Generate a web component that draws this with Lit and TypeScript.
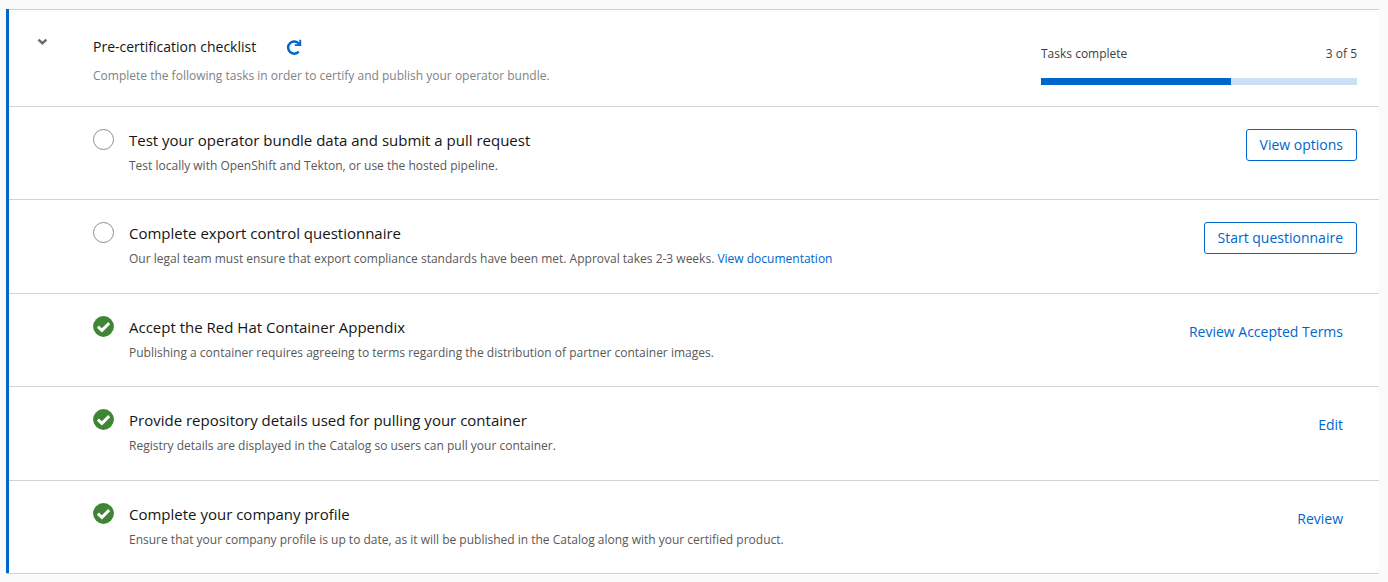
import { LitElement, html, svg, css, nothing } from "lit";
import { customElement, property, state } from "lit/decorators.js";

interface Task {
  title: string;
  description: string;
  link?: string;
  done: boolean;
  action: string;
}

const TASKS: Task[] = [
  {
    title: "Test your operator bundle data and submit a pull request",
    description: "Test locally with OpenShift and Tekton, or use the hosted pipeline.",
    done: false,
    action: "View options",
  },
  {
    title: "Complete export control questionnaire",
    description:
      "Our legal team must ensure that export compliance standards have been met. Approval takes 2-3 weeks.",
    link: "View documentation",
    done: false,
    action: "Start questionnaire",
  },
  {
    title: "Accept the Red Hat Container Appendix",
    description:
      "Publishing a container requires agreeing to terms regarding the distribution of partner container images.",
    done: true,
    action: "Review Accepted Terms",
  },
  {
    title: "Provide repository details used for pulling your container",
    description: "Registry details are displayed in the Catalog so users can pull your container.",
    done: true,
    action: "Edit",
  },
  {
    title: "Complete your company profile",
    description:
      "Ensure that your company profile is up to date, as it will be published in the Catalog along with your certified product.",
    done: true,
    action: "Review",
  },
];

@customElement("task-row")
class TaskRow extends LitElement {
  static styles = css`
    :host {
      display: block;
      border-top: 1px solid #d2d2d2;
    }
    .row {
      display: flex;
      align-items: flex-start;
      padding: 22px 22px 16px 84px;
    }
    .status {
      flex: none;
      display: block;
      width: 21px;
      height: 21px;
      margin-right: 15px;
    }
    .text {
      flex: 1;
      min-width: 0;
    }
    .title {
      margin: 0;
      font-size: 15px;
      font-weight: 400;
      line-height: 22px;
      color: #151515;
    }
    .description {
      margin: 6px 0 0;
      font-size: 12px;
      line-height: 18px;
      color: #585858;
    }
    .link {
      color: #0066cc;
      text-decoration: none;
    }
    .action {
      flex: none;
      margin-left: 16px;
      height: 32px;
      padding: 0 13px;
      border: 1px solid #0066cc;
      border-radius: 3px;
      background: transparent;
      color: #0066cc;
      font: inherit;
      font-size: 14px;
      line-height: 20px;
      cursor: pointer;
    }
    .action.plain {
      border-color: transparent;
    }
  `;

  @property({ attribute: false }) task!: Task;

  render() {
    const { title, description, link, done, action } = this.task;
    return html`
      <div class="row">
        <svg class="status" viewBox="0 0 21 21" role="img" aria-label=${done ? "Complete" : "Not started"}>
          ${done
            ? svg`<circle cx="10.5" cy="10.5" r="10.4" fill="#3e8635"></circle>
                <path d="M4.9 10.6 L8.9 14.4 L16.2 7.1" fill="none" stroke="#fff" stroke-width="2.9"></path>`
            : svg`<circle cx="10.5" cy="10.5" r="10" fill="#fff" stroke="#8a8d90"></circle>`}
        </svg>
        <div class="text">
          <h3 class="title">${title}</h3>
          <p class="description">${description}${link ? html` <a class="link" href="#">${link}</a>` : nothing}</p>
        </div>
        <button class="action ${done ? "plain" : ""}" type="button">${action}</button>
      </div>
    `;
  }
}

@customElement("app-root")
class AppRoot extends LitElement {
  static styles = css`
    :host {
      display: flex;
      box-sizing: border-box;
      min-height: 100vh;
      padding: 9px 9px 8px 6px;
      background: #fafafa;
      font-family: "Open Sans", "Noto Sans", sans-serif;
    }
    .card {
      flex: 1;
      display: flex;
      flex-direction: column;
      min-width: 0;
      border-bottom: 1px solid #d2d2d2;
    }
    .body {
      flex: 1;
      display: flex;
      flex-direction: column;
      border-left: 3px solid #0066cc;
      background: #fff;
    }
    .header {
      display: flex;
      align-items: flex-start;
      border-top: 1px solid #d2d2d2;
      padding: 24px 22px 21px 25px;
    }
    .toggle,
    .refresh {
      flex: none;
      display: block;
      padding: 0;
      border: 0;
      background: none;
      cursor: pointer;
    }
    .toggle {
      width: 16px;
      height: 16px;
      margin-right: 43px;
      color: #6a6e73;
    }
    .refresh {
      width: 16px;
      height: 16px;
      color: #0066cc;
    }
    .icon {
      display: block;
      width: 16px;
      height: 16px;
    }
    .intro {
      flex: 1;
      min-width: 0;
    }
    .heading {
      display: flex;
      align-items: center;
      gap: 30px;
    }
    .name {
      margin: 0;
      font-size: 14px;
      font-weight: 400;
      line-height: 26px;
      color: #151515;
    }
    .hint {
      margin: 7px 0 0;
      font-size: 12px;
      line-height: 18px;
      color: #808284;
    }
    .progress {
      flex: none;
      width: 316px;
      padding-top: 11px;
      font-size: 12px;
      line-height: 18px;
      color: #3c3f42;
    }
    .labels {
      display: flex;
      justify-content: space-between;
    }
    .track {
      height: 7px;
      margin-top: 15px;
      background: #cce0f5;
    }
    .fill {
      height: 100%;
      background: #0066cc;
    }
    .tasks {
      flex: 1;
      display: grid;
      grid-auto-rows: 1fr;
    }
  `;

  @state() private open = true;

  render() {
    const done = TASKS.filter((t) => t.done).length;
    return html`
      <section class="card">
        <div class="body">
          <header class="header">
            <button
              class="toggle"
              type="button"
              aria-label="Toggle checklist"
              aria-expanded=${this.open}
              @click=${() => (this.open = !this.open)}
            >
              <svg class="icon" viewBox="0 0 16 16" aria-hidden="true">
                <path d="M4.4 5.6 L8.4 9.2 L12.4 5.6" fill="none" stroke="currentColor" stroke-width="2.5"></path>
              </svg>
            </button>
            <div class="intro">
              <div class="heading">
                <h2 class="name">Pre-certification checklist</h2>
                <button class="refresh" type="button" aria-label="Refresh">
                  <svg class="icon" viewBox="0 0 16 16" aria-hidden="true">
                    <path d="M12.7 12.7 A6.1 6.1 0 1 1 12.9 4.7" fill="none" stroke="currentColor" stroke-width="2.5"></path>
                    <path d="M15.2 0.8 V7 H8.8 V5.2 H12 L13.3 4 V0.8 Z" fill="currentColor"></path>
                  </svg>
                </button>
              </div>
              <p class="hint">Complete the following tasks in order to certify and publish your operator bundle.</p>
            </div>
            <div class="progress">
              <div class="labels">
                <span id="progress-label">Tasks complete</span>
                <span>${done} of ${TASKS.length}</span>
              </div>
              <div
                class="track"
                role="progressbar"
                aria-labelledby="progress-label"
                aria-valuemin="0"
                aria-valuemax=${TASKS.length}
                aria-valuenow=${done}
              >
                <div class="fill" style="width:${(done / TASKS.length) * 100}%"></div>
              </div>
            </div>
          </header>
          ${this.open
            ? html`<div class="tasks">${TASKS.map((t) => html`<task-row .task=${t}></task-row>`)}</div>`
            : nothing}
        </div>
      </section>
    `;
  }
}
